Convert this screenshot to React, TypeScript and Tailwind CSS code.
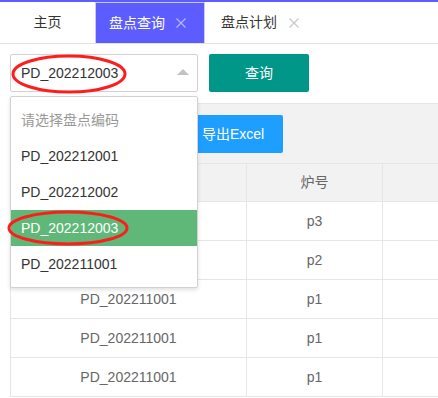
import { Fragment } from "react";

const font = "font-['Liberation_Sans','Noto_Sans_CJK_SC',sans-serif]";

const options = ["PD_202212001", "PD_202212002", "PD_202212003", "PD_202211001"];

// first two codes sit under the open dropdown, so they are not drawn
const rows = [
  { code: "", furnace: "p3" },
  { code: "", furnace: "p2" },
  { code: "PD_202211001", furnace: "p1" },
  { code: "PD_202211001", furnace: "p1" },
  { code: "PD_202211001", furnace: "p1" },
];

function CloseIcon({ className }: { className: string }) {
  return (
    <svg width="10" height="10" viewBox="0 0 10 10" className={className} aria-hidden="true">
      <path d="M0.5 0.5 L9.5 9.5 M9.5 0.5 L0.5 9.5" stroke="currentColor" strokeWidth="1.2" fill="none" />
    </svg>
  );
}

function Tabs() {
  return (
    <div>
      <div className="h-[2px] bg-[#5d5dff]" />
      <div className="flex h-[42px] border-b border-[#e2e2e2] text-[14px] text-[#333]">
        <div className="flex w-[95px] items-center justify-center">主页</div>
        <div className="flex w-[110px] items-center border border-b-0 border-[#c9c9f5] bg-[#5d5dff] pl-[13px] text-white">
          盘点查询
          <CloseIcon className="ml-[11px] text-[#b4b4ff]" />
        </div>
        <div className="flex w-[110px] items-center pl-[16px]">
          盘点计划
          <CloseIcon className="ml-[12px] text-[#c8c8c8]" />
        </div>
      </div>
    </div>
  );
}

function Dropdown() {
  return (
    <div className="absolute left-[10px] top-[96px] w-[188px] rounded-[2px] border border-[#d2d2d2] bg-white py-[5px] text-[14px] shadow-[0_2px_4px_rgba(0,0,0,0.12)]">
      <div className="flex h-[36px] items-center px-[10px] text-[#999]">请选择盘点编码</div>
      {options.map((opt) => (
        <div
          key={opt}
          className={`flex h-[36px] items-center px-[10px] ${
            opt === "PD_202212003" ? "bg-[#5fb878] text-white" : "text-[#333]"
          }`}
        >
          {opt}
        </div>
      ))}
    </div>
  );
}

export default function App() {
  return (
    <div className={`relative h-[398px] w-[438px] overflow-hidden bg-white ${font}`}>
      <Tabs />
      <div className="px-[10px] pt-[10px]">
        <div className="flex gap-[11px]">
          <div className="flex h-[38px] w-[188px] items-center justify-between rounded-[2px] border border-[#d2d2d2] pl-[10px] pr-[8px] text-[14px] text-[#333]">
            PD_202212003
            <span className="mt-[-2px] h-0 w-0 border-x-[6px] border-b-[6px] border-x-transparent border-b-[#c2c2c2]" />
          </div>
          <button className="h-[38px] w-[100px] rounded-[2px] bg-[#009688] text-[14px] text-white">查询</button>
        </div>

        <div className="mt-[11px] w-[460px] border-l border-t border-[#e6e6e6]">
          <div className="flex h-[59px] gap-[10px] bg-[#f2f2f2] pl-[10px] pt-[11px]">
            <div className="h-[38px] w-[152px] rounded-[2px] bg-[#1e9fff]" />
            <button className="h-[38px] w-[100px] rounded-[2px] bg-[#1e9fff] pl-[19px] text-left text-[14px] text-white">
              导出Excel
            </button>
          </div>
          <div className="grid grid-cols-[236px_136px_1fr] text-[14px] text-[#666]">
            <div className="h-[39px] border-y border-r border-[#e6e6e6] bg-[#f2f2f2]" />
            <div className="flex h-[39px] items-center justify-center border-y border-r border-[#e6e6e6] bg-[#f2f2f2]">炉号</div>
            <div className="h-[39px] border-y border-[#e6e6e6] bg-[#f2f2f2]" />
            {rows.map((r, i) => (
              <Fragment key={i}>
                <div className="flex h-[39px] items-center justify-center border-b border-r border-[#e6e6e6]">{r.code}</div>
                <div className="flex h-[39px] items-center justify-center border-b border-r border-[#e6e6e6]">{r.furnace}</div>
                <div className="h-[39px] border-b border-[#e6e6e6]" />
              </Fragment>
            ))}
          </div>
        </div>
      </div>

      <Dropdown />

      <svg className="pointer-events-none absolute left-0 top-0" width="438" height="398" aria-hidden="true">
        <ellipse cx="69" cy="74" rx="56" ry="18" fill="none" stroke="#ff1c1c" strokeWidth="3" />
        <ellipse cx="68" cy="228" rx="59" ry="16" fill="none" stroke="#ff1c1c" strokeWidth="3" />
      </svg>
    </div>
  );
}
